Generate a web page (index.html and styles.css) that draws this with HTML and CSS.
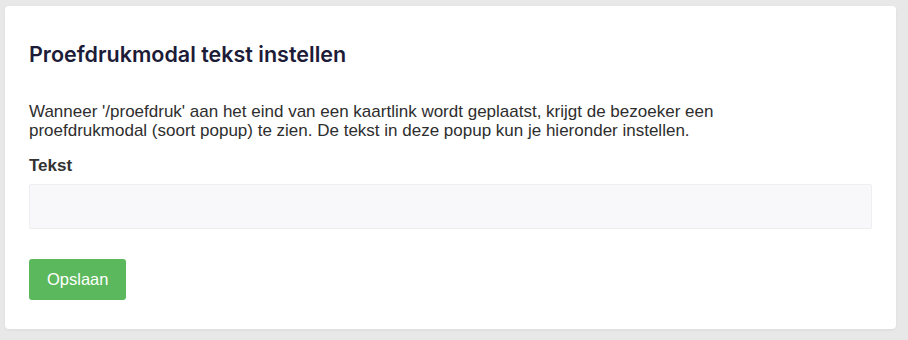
FILE: index.html
```html
<!DOCTYPE html>
<html lang="nl">

<head>
    <meta charset="UTF-8">
    <meta name="viewport" content="width=device-width, initial-scale=1.0">
    <title>Proefdrukmodal tekst instellen</title>
    <link rel="stylesheet" href="styles.css">
</head>

<body>
    <main class="card">
        <h2 class="card-title">Proefdrukmodal tekst instellen</h2>
        <p class="card-intro">Wanneer '/proefdruk' aan het eind van een kaartlink wordt geplaatst, krijgt de bezoeker een
            proefdrukmodal (soort popup) te zien. De tekst in deze popup kun je hieronder instellen.</p>
        <form class="settings-form" onsubmit="return false;">
            <label for="proof-text" class="form-label">Tekst</label>
            <input type="text" id="proof-text" class="form-input">
            <button type="submit" class="save-button">Opslaan</button>
        </form>
    </main>
</body>

</html>
```

FILE: styles.css
```css
body {
    margin: 0;
    padding: 6px 12px 11px 5px;
    background: #e8e8e9;
    font-family: 'Liberation Sans', Arial, sans-serif;
    color: #333;
}

.card {
    background: #fff;
    border-radius: 4px;
    box-shadow: 0 1px 3px rgba(0, 0, 0, 0.06);
    padding: 24px 24px 29px;
}

.card-title {
    font-family: Inter, 'Noto Sans', sans-serif;
    font-size: 21.5px;
    line-height: 26px;
    font-weight: 600;
    color: #1d1c38;
    margin: 11px 0 0 0;
}

.card-intro {
    max-width: 790px;
    font-size: 17px;
    line-height: 19px;
    margin: 35px 0 0 0;
    color: #2e2e2e;
}

.settings-form {
    display: flex;
    flex-direction: column;
    align-items: flex-start;
}

.form-label {
    font-weight: bold;
    font-size: 17px;
    line-height: 19px;
    margin-top: 16px;
}

.form-input {
    box-sizing: border-box;
    width: 100%;
    height: 45px;
    margin-top: 9px;
    background: #f8f8fa;
    border: 1px solid #eeeef1;
    border-radius: 2px;
    padding: 0 12px;
    font-family: inherit;
    font-size: 16px;
    outline: none;
}

.save-button {
    margin-top: 30px;
    height: 41px;
    padding: 0 18px;
    background: #5cb85c;
    color: #fff;
    border: none;
    border-radius: 3px;
    font-family: inherit;
    font-size: 16.5px;
    cursor: pointer;
}

.save-button:hover {
    background: #4cae4c;
}
```
